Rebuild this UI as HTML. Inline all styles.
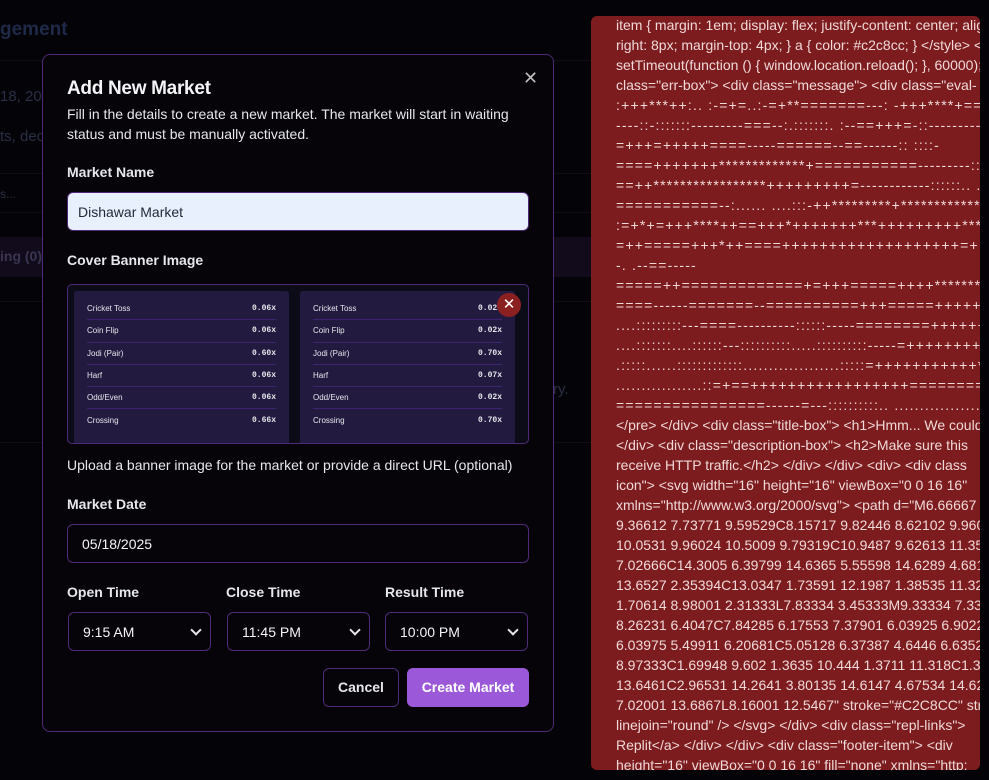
<!DOCTYPE html>
<html><head><meta charset="utf-8"><style>
*{box-sizing:border-box;margin:0;padding:0}
body{width:989px;height:780px;background:#040307;font-family:"Liberation Sans",sans-serif;position:relative;overflow:hidden;color:#e5e7eb}
.bg{position:absolute;color:#2a2f45}
.hl{position:absolute;left:0;width:591px;height:1px;background:#100c18}
.modal{position:absolute;left:42px;top:54px;width:512px;height:678px;background:#060409;border:1px solid #4f2a78;border-radius:8px}
.ab{position:absolute}
h1{position:absolute;left:24px;top:23px;font-size:19px;font-weight:bold;color:#f3f4f6;letter-spacing:-0.3px}
.desc{position:absolute;left:24px;top:49px;font-size:14px;line-height:20px;color:#e5e7eb;width:470px}
.lbl{position:absolute;font-size:14px;font-weight:bold;color:#e5e7eb}
.inp{position:absolute;border:1px solid #4f2a78;border-radius:6px;font-size:14px;color:#f3f4f6;padding-left:14px;display:flex;align-items:center}
.sel{justify-content:space-between;padding-right:6px}
.chev{width:8px;height:8px;border-right:2px solid #e5e7eb;border-bottom:2px solid #e5e7eb;transform:rotate(45deg);margin-top:-4px;margin-right:4px}
.card{position:absolute;top:6px;width:215px;height:154px;background:#231a40;border-radius:3px;padding:7px 13px 0 13px}
.row{display:flex;justify-content:space-between;height:22.3px;align-items:center;font-size:8px;color:#e5e7eb;border-bottom:1px solid #3d2470}
.row span:last-child{font-family:"Liberation Mono",monospace;font-weight:bold}
.red{position:absolute;left:591px;top:16px;width:389px;height:754px;background:#7c1c1e;border-radius:6px;overflow:hidden;padding:0 0 0 25px}
.red div{white-space:nowrap;font-size:14px;line-height:20px;color:#f0d8d8;margin-top:-1px;margin-bottom:1px}
.red .a{letter-spacing:1.2px}
</style></head><body>
<div class="bg" style="left:0;top:19px;font-size:19px;font-weight:bold;color:#1f2a48">gement</div>
<div class="hl" style="top:60px"></div>
<div class="bg" style="left:0;top:88px;font-size:15px">18, 2025</div>
<div class="bg" style="left:0;top:128px;font-size:15px">ts, dec</div>
<div class="hl" style="top:173px"></div>
<div class="bg" style="left:0;top:187px;font-size:12px">s...</div>
<div class="hl" style="top:212px"></div>
<div class="ab" style="left:0;top:237px;width:591px;height:40px;background:#120b1c"></div>
<div class="bg" style="left:0;top:248px;font-size:14px;font-weight:bold;color:#3a3550">ing (0)</div>
<div class="hl" style="top:301px"></div>
<div class="bg" style="left:553px;top:381px;font-size:15px">ry.</div>
<div class="hl" style="top:442px"></div>

<div class="modal">
<div class="ab" style="left:480px;top:13px;font-size:18px;color:#bbb">✕</div>
<h1>Add New Market</h1>
<div class="desc">Fill in the details to create a new market. The market will start in waiting status and must be manually activated.</div>
<div class="lbl" style="left:24px;top:109px">Market Name</div>
<div class="inp" style="left:24px;top:137px;width:462px;height:39px;background:#e8effd;color:#1f2937;padding-left:10px">Dishawar Market</div>
<div class="lbl" style="left:24px;top:197px">Cover Banner Image</div>
<div class="ab" style="left:24px;top:229px;width:462px;height:160px;background:#0c0c18;border:1px solid #4f2a78;border-radius:5px;overflow:hidden">
 <div class="card" style="left:6px"><div class="row"><span>Cricket Toss</span><span>0.06x</span></div><div class="row"><span>Coin Flip</span><span>0.06x</span></div><div class="row"><span>Jodi (Pair)</span><span>0.60x</span></div><div class="row"><span>Harf</span><span>0.06x</span></div><div class="row"><span>Odd/Even</span><span>0.06x</span></div><div class="row" style="border:none"><span>Crossing</span><span>0.66x</span></div></div>
 <div class="card" style="left:232px"><div class="row"><span>Cricket Toss</span><span>0.02x</span></div><div class="row"><span>Coin Flip</span><span>0.02x</span></div><div class="row"><span>Jodi (Pair)</span><span>0.70x</span></div><div class="row"><span>Harf</span><span>0.07x</span></div><div class="row"><span>Odd/Even</span><span>0.02x</span></div><div class="row" style="border:none"><span>Crossing</span><span>0.70x</span></div></div>
 <div class="ab" style="left:429px;top:8px;width:24px;height:24px;border-radius:50%;background:#8a2020;color:#fff;font-size:15px;text-align:center;line-height:24px">✕</div>
</div>
<div class="ab" style="left:24px;top:402px;font-size:14px;color:#e5e7eb">Upload a banner image for the market or provide a direct URL (optional)</div>
<div class="lbl" style="left:24px;top:441px">Market Date</div>
<div class="inp" style="left:24px;top:469px;width:462px;height:39px">05/18/2025</div>
<div class="lbl" style="left:24px;top:529px">Open Time</div>
<div class="lbl" style="left:183px;top:529px">Close Time</div>
<div class="lbl" style="left:342px;top:529px">Result Time</div>
<div class="inp sel" style="left:25px;top:557px;width:143px;height:39px">9:15 AM<i class="chev"></i></div>
<div class="inp sel" style="left:184px;top:557px;width:143px;height:39px">11:45 PM<i class="chev"></i></div>
<div class="inp sel" style="left:342px;top:557px;width:143px;height:39px">10:00 PM<i class="chev"></i></div>
<div class="ab" style="left:280px;top:613px;width:76px;height:39px;border:1px solid #4f2a78;border-radius:6px;font-size:14px;font-weight:bold;text-align:center;line-height:37px">Cancel</div>
<div class="ab" style="left:364px;top:613px;width:122px;height:39px;background:#9b59d9;border-radius:6px;font-size:14px;font-weight:bold;text-align:center;line-height:39px;color:#fff">Create Market</div>
</div>

<div class="red">
<div>item { margin: 1em; display: flex; justify-content: center; align-items</div>
<div>right: 8px; margin-top: 4px; } a { color: #c2c8cc; } &lt;/style&gt; &lt;</div>
<div>setTimeout(function () { window.location.reload(); }, 60000); &lt;/</div>
<div>class="err-box"&gt; &lt;div class="message"&gt; &lt;div class="eval-</div>
<div class="a">:+++***++:.. :-=+=..:-=+**=======---: -+++****+=====</div>
<div class="a">----::-:::::::---------===--:.:::::::. :--==+++=-::-----------======</div>
<div class="a">=+++=+++++====-----======--==------:: ::::-</div>
<div class="a">====+++++++*************+===========---------:::.. ..:</div>
<div class="a">==++*****************+++++++++=------------::::::.. .....:::-=</div>
<div class="a">===========--:...... ....:::-++*********+**************+++++</div>
<div class="a">:=+*+=+++****++==+++*+++++++***+++++++++***</div>
<div class="a">=++=====+++*++====+++++++++++++++++++=+</div>
<div class="a">-. .--==-----</div>
<div class="a">=====++=============+=+++=====++++*******</div>
<div class="a">====------=======--==========+++=====+++++</div>
<div class="a">....:::::::::---====----------::::::-----========+++++++++</div>
<div class="a">....:::::::....::::::---::::::::::.....::::::::::-----=++++++++++****+++++++=</div>
<div class="a">.:::::......:::::::::::::...................:::::=+++++++++++*****++++++=====</div>
<div class="a">.................::=+==+++++++++++++++++============----</div>
<div class="a">================------=---::::::::::.. ......................:::::::::-----</div>
<div>&lt;/pre&gt; &lt;/div&gt; &lt;div class="title-box"&gt; &lt;h1&gt;Hmm... We could</div>
<div>&lt;/div&gt; &lt;div class="description-box"&gt; &lt;h2&gt;Make sure this</div>
<div>receive HTTP traffic.&lt;/h2&gt; &lt;/div&gt; &lt;/div&gt; &lt;div&gt; &lt;div class</div>
<div>icon"&gt; &lt;svg width="16" height="16" viewBox="0 0 16 16"</div>
<div>xmlns="http://www.w3.org/2000/svg"&gt; &lt;path d="M6.66667</div>
<div>9.36612 7.73771 9.59529C8.15717 9.82446 8.62102 9.96074</div>
<div>10.0531 9.96024 10.5009 9.79319C10.9487 9.62613 11.3554</div>
<div>7.02666C14.3005 6.39799 14.6365 5.55598 14.6289 4.68199</div>
<div>13.6527 2.35394C13.0347 1.73591 12.1987 1.38535 11.3247</div>
<div>1.70614 8.98001 2.31333L7.83334 3.45333M9.33334 7.3333</div>
<div>8.26231 6.4047C7.84285 6.17553 7.37901 6.03925 6.90224</div>
<div>6.03975 5.49911 6.20681C5.05128 6.37387 4.6446 6.63528</div>
<div>8.97333C1.69948 9.602 1.3635 10.444 1.3711 11.318C1.378</div>
<div>13.6461C2.96531 14.2641 3.80135 14.6147 4.67534 14.6222</div>
<div>7.02001 13.6867L8.16001 12.5467" stroke="#C2C8CC" stroke</div>
<div>linejoin="round" /&gt; &lt;/svg&gt; &lt;/div&gt; &lt;div class="repl-links"&gt;</div>
<div>Replit&lt;/a&gt; &lt;/div&gt; &lt;/div&gt; &lt;div class="footer-item"&gt; &lt;div</div>
<div>height="16" viewBox="0 0 16 16" fill="none" xmlns="http:</div>
</div>
</body></html>
